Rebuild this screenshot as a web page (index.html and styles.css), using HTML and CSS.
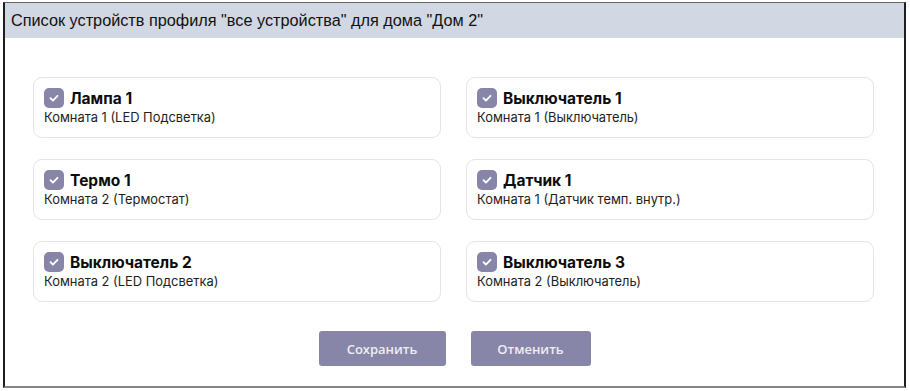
FILE: index.html
```html
<!DOCTYPE html>
<html lang="ru">
<head>
    <meta charset="UTF-8">
    <title>Список устройств</title>
    <link rel="stylesheet" href="styles.css">
</head>
<body>
    <div class="frame">
        <div class="header">Список устройств профиля "все устройства" для дома "Дом 2"</div>

        <div class="devices">
            <div class="card">
                <div class="title"><span class="check"><svg viewBox="0 0 20 20"><path d="M6.5 10.2l2.4 2.4 4.6-4.8"/></svg></span>Лампа 1</div>
                <div class="room">Комната 1 (LED Подсветка)</div>
            </div>
            <div class="card">
                <div class="title"><span class="check"><svg viewBox="0 0 20 20"><path d="M6.5 10.2l2.4 2.4 4.6-4.8"/></svg></span>Выключатель 1</div>
                <div class="room">Комната 1 (Выключатель)</div>
            </div>
            <div class="card">
                <div class="title"><span class="check"><svg viewBox="0 0 20 20"><path d="M6.5 10.2l2.4 2.4 4.6-4.8"/></svg></span>Термо 1</div>
                <div class="room">Комната 2 (Термостат)</div>
            </div>
            <div class="card">
                <div class="title"><span class="check"><svg viewBox="0 0 20 20"><path d="M6.5 10.2l2.4 2.4 4.6-4.8"/></svg></span>Датчик 1</div>
                <div class="room">Комната 1 (Датчик темп. внутр.)</div>
            </div>
            <div class="card">
                <div class="title"><span class="check"><svg viewBox="0 0 20 20"><path d="M6.5 10.2l2.4 2.4 4.6-4.8"/></svg></span>Выключатель 2</div>
                <div class="room">Комната 2 (LED Подсветка)</div>
            </div>
            <div class="card">
                <div class="title"><span class="check"><svg viewBox="0 0 20 20"><path d="M6.5 10.2l2.4 2.4 4.6-4.8"/></svg></span>Выключатель 3</div>
                <div class="room">Комната 2 (Выключатель)</div>
            </div>
        </div>

        <div class="actions">
            <button class="btn btn-save">Сохранить</button>
            <button class="btn btn-cancel">Отменить</button>
        </div>
    </div>
</body>
</html>
```

FILE: styles.css
```css
body {
    margin: 0;
    background-color: #fff;
    font-family: Inter, "Noto Sans", sans-serif;
    color: #111;
}

.frame {
    margin: 2px 0 0 3px;
    width: 899px;
    height: 383px;
    border-top: 1px solid #666;
    border-left: 2px solid #1e1e1e;
    border-right: 2px solid #1e1e1e;
    border-bottom: 2px solid #858585;
    background-color: #fff;
}

.header {
    height: 35px;
    line-height: 34px;
    padding-left: 6px;
    background-color: #d1d7e3;
    font-family: "Liberation Sans", Arial, sans-serif;
    font-size: 16.25px;
    color: #111;
}

.devices {
    display: grid;
    grid-template-columns: 408px 408px;
    column-gap: 25px;
    row-gap: 21px;
    padding: 39px 0 0 28px;
}

.card {
    height: 61px;
    box-sizing: border-box;
    border: 1px solid #e3e3ea;
    border-radius: 9px;
    padding: 10px 10px 0 10px;
}

.title {
    display: flex;
    align-items: center;
    font-size: 15.5px;
    font-weight: 700;
    height: 20px;
    color: #0d0d0d;
}

.title .check {
    margin-right: 6px;
}

.check {
    width: 20px;
    height: 20px;
    border-radius: 5px;
    background-color: #8886a8;
    display: flex;
    flex-shrink: 0;
}

.check svg {
    width: 20px;
    height: 20px;
    fill: none;
    stroke: #fff;
    stroke-width: 1.8;
    stroke-linecap: round;
    stroke-linejoin: round;
}

.room {
    margin-top: 2px;
    font-size: 12.9px;
    line-height: 16px;
    color: #1e1e1e;
}

.actions {
    display: flex;
    justify-content: center;
    gap: 25px;
    margin-top: 29px;
}

.btn {
    height: 35px;
    border: none;
    border-radius: 3px;
    background-color: #8886a8;
    color: #eeeef4;
    font-family: "Open Sans", sans-serif;
    font-size: 13px;
    font-weight: 600;
    cursor: pointer;
}

.btn-save {
    width: 127px;
}

.btn-cancel {
    width: 120px;
}
```
